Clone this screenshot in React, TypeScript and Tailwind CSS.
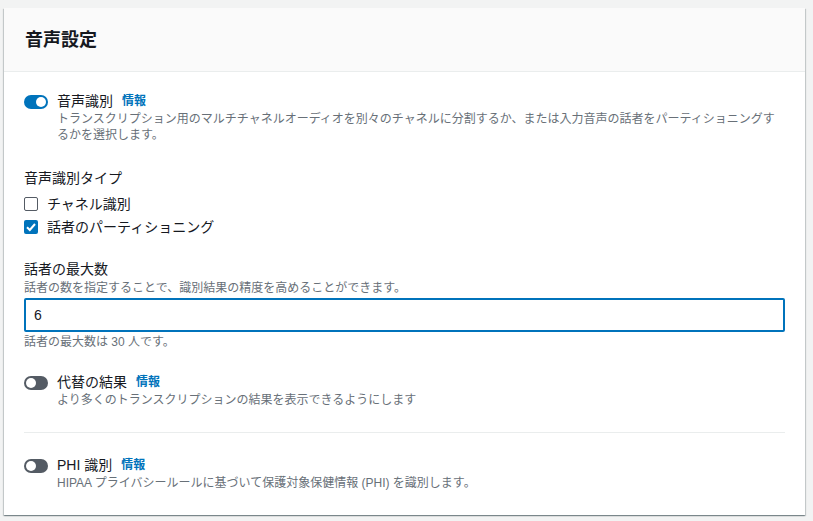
import { useState } from "react"

const font = { fontFamily: '"Liberation Sans", "Noto Sans CJK JP", sans-serif' }

function Toggle({ on, onClick }: { on: boolean; onClick: () => void }) {
  return (
    <button
      onClick={onClick}
      className={`relative mt-[4px] h-[14px] w-6 shrink-0 rounded-full ${on ? "bg-[#0073bb]" : "bg-[#545b64]"}`}
    >
      <span
        className={`absolute top-[2px] h-[10px] w-[10px] rounded-full bg-white ${on ? "left-[12px]" : "left-[2px]"}`}
      />
    </button>
  )
}

function Checkbox({ checked, label, onClick }: { checked: boolean; label: string; onClick: () => void }) {
  return (
    <label className="flex h-[23px] cursor-pointer items-center gap-[9px]" onClick={onClick}>
      <span
        className={`flex h-[14px] w-[14px] items-center justify-center rounded-[2px] ${
          checked ? "bg-[#0073bb]" : "border border-[#545b64] bg-white"
        }`}
      >
        {checked && (
          <svg viewBox="0 0 14 14" className="h-[14px] w-[14px]">
            <path d="M3 7.2 L5.8 10 L11 4" fill="none" stroke="white" strokeWidth="2" />
          </svg>
        )}
      </span>
      <span className="text-sm leading-[22px] text-[#16191f]">{label}</span>
    </label>
  )
}

function ToggleField({
  on,
  onClick,
  label,
  desc,
}: {
  on: boolean
  onClick: () => void
  label: string
  desc: string
}) {
  return (
    <div className="flex gap-[9px]">
      <Toggle on={on} onClick={onClick} />
      <div className="flex-1">
        <div className="flex items-center gap-[9px] leading-[22px]">
          <span className="text-sm text-[#16191f]">{label}</span>
          <a className="cursor-pointer text-xs font-bold text-[#0073bb]">情報</a>
        </div>
        <p className="text-xs leading-4 text-[#687078]">{desc}</p>
      </div>
    </div>
  )
}

export default function App() {
  const [diar, setDiar] = useState(true)
  const [alt, setAlt] = useState(false)
  const [phi, setPhi] = useState(false)
  const [channel, setChannel] = useState(false)
  const [speaker, setSpeaker] = useState(true)
  const [max, setMax] = useState("6")

  return (
    <div className="min-h-[521px] bg-[#f2f3f3] pt-2 pl-1" style={font}>
      <div className="w-[801px] bg-white shadow-[0_1px_1px_0_rgba(0,28,36,0.3),1px_1px_1px_0_rgba(0,28,36,0.15),-1px_1px_1px_0_rgba(0,28,36,0.15)]">
        <div className="flex h-16 items-center border-b border-[#eaeded] bg-[#fafafa] px-[21px]">
          <h2 className="text-lg font-bold text-[#16191f]">音声設定</h2>
        </div>

        <div className="px-5 pt-[19px] pb-6">
          <ToggleField
            on={diar}
            onClick={() => setDiar(!diar)}
            label="音声識別"
            desc="トランスクリプション用のマルチチャネルオーディオを別々のチャネルに分割するか、または入力音声の話者をパーティショニングするかを選択します。"
          />

          <div className="mt-6">
            <div className="text-sm leading-[22px] text-[#16191f]">音声識別タイプ</div>
            <div className="mt-[3px]">
              <Checkbox checked={channel} label="チャネル識別" onClick={() => setChannel(!channel)} />
              <Checkbox checked={speaker} label="話者のパーティショニング" onClick={() => setSpeaker(!speaker)} />
            </div>
          </div>

          <div className="mt-5">
            <div className="text-sm leading-[22px] text-[#16191f]">話者の最大数</div>
            <div className="text-xs leading-4 text-[#687078]">
              話者の数を指定することで、識別結果の精度を高めることができます。
            </div>
            <input
              value={max}
              onChange={(e) => setMax(e.target.value)}
              className="mt-[2px] h-[34px] w-full rounded-[2px] border-2 border-[#0073bb] px-2 text-sm text-[#16191f] outline-none"
            />
            <div className="mt-[2px] text-xs leading-4 text-[#687078]">話者の最大数は 30 人です。</div>
          </div>

          <div className="mt-[22px]">
            <ToggleField
              on={alt}
              onClick={() => setAlt(!alt)}
              label="代替の結果"
              desc="より多くのトランスクリプションの結果を表示できるようにします"
            />
          </div>

          <div className="mt-[24px] border-t border-[#eaeded]" />

          <div className="mt-[22px]">
            <ToggleField
              on={phi}
              onClick={() => setPhi(!phi)}
              label="PHI 識別"
              desc="HIPAA プライバシールールに基づいて保護対象保健情報 (PHI) を識別します。"
            />
          </div>
        </div>
      </div>
    </div>
  )
}
